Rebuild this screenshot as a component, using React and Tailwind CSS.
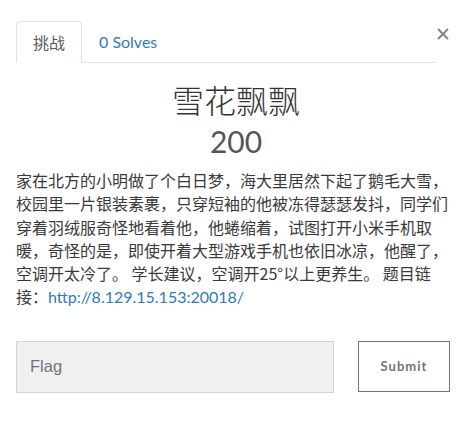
export default function App() {
  return (
    <div className="relative w-[472px] h-[440px] bg-white font-['Lato','Noto_Sans_CJK_SC',sans-serif] text-[#373a3c]">
      <button className="absolute left-[436px] top-[27px] w-[13px] h-[13px] flex items-center justify-center">
        <svg width="12" height="12" viewBox="0 0 12 12">
          <path d="M1 1 L11 11 M11 1 L1 11" stroke="#858585" strokeWidth="2" />
        </svg>
      </button>
      <div className="px-4 pt-[21px]">
        <div className="flex mr-5 border-b border-[#dee2e6]">
          <div className="-mb-px h-[42px] px-4 flex items-center border border-[#dee2e6] border-b-white rounded-t-[4px] bg-white text-[16px] text-[#555b61] font-['Noto_Sans_CJK_SC',sans-serif]">
            挑战
          </div>
          <div className="h-[41px] pl-[17px] pr-4 flex items-center text-[16px] text-[#337ab7]">
            0 Solves
          </div>
        </div>
        <h3 className="mt-[16px] text-center text-[32px] leading-[40px] font-['Noto_Sans_CJK_SC',sans-serif] font-light text-[#333]">
          雪花飘飘
        </h3>
        <div className="mt-[4px] text-center text-[30px] leading-[36px] font-normal text-[#555]">200</div>
        <p className="mt-[10px] text-[16px] leading-[23.3px] text-[#373a3c] font-['Noto_Sans_CJK_SC',sans-serif] break-all">
          家在北方的小明做了个白日梦，海大里居然下起了鹅毛大雪，校园里一片银装素裹，只穿短袖的他被冻得瑟瑟发抖，同学们穿着羽绒服奇怪地看着他，他蜷缩着，试图打开小米手机取暖，奇怪的是，即使开着大型游戏手机也依旧冰凉，他醒了，空调开太冷了。 学长建议，空调开25°以上更养生。 题目链接：
          <a className="text-[#337ab7] font-['Lato',sans-serif]">http://8.129.15.153:20018/</a>
        </p>
        <div className="mt-[32px] flex items-start">
          <div className="w-[318px] h-[52px] bg-[#f0f0f0] border border-[#ced4da] flex items-center px-[13px] text-[16.5px] text-[#6c757d] font-['Liberation_Sans',sans-serif]">
            Flag
          </div>
          <button className="ml-[24px] w-[92px] h-[51px] border border-[#6c757d] bg-white text-[#6c757d] text-[13px] font-bold tracking-[0.08em] font-['Lato',sans-serif]">
            Submit
          </button>
        </div>
      </div>
    </div>
  );
}
